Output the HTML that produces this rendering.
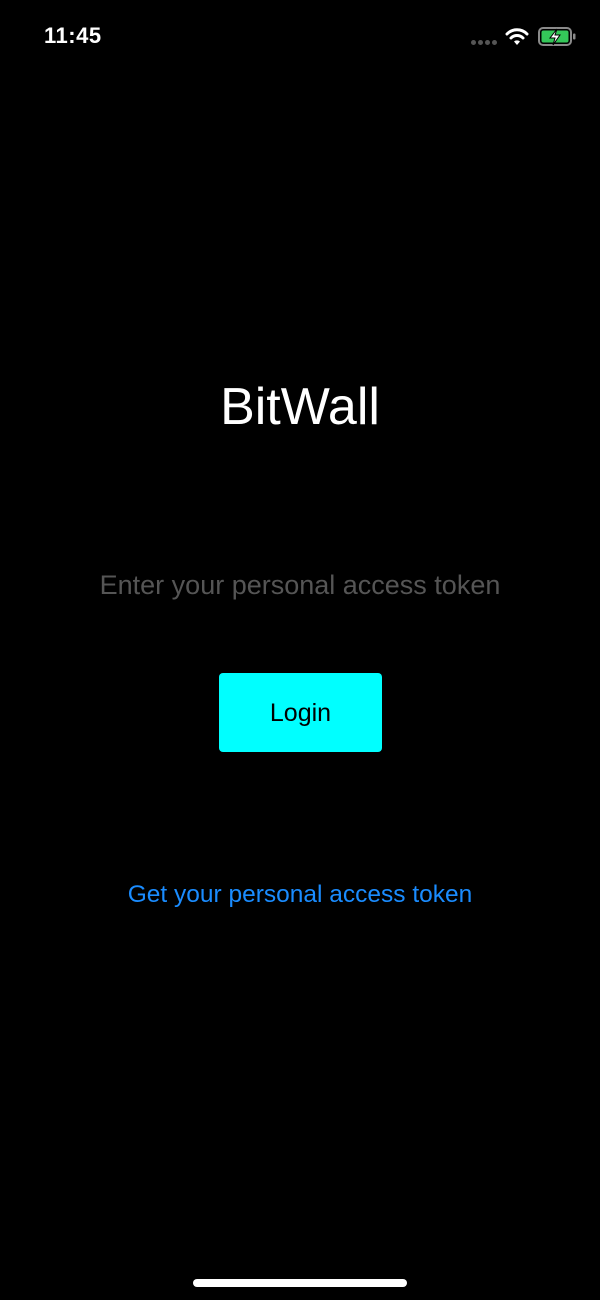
<!DOCTYPE html>
<html><head><meta charset="utf-8"><style>
html,body{margin:0;padding:0;background:#000;width:600px;height:1300px;overflow:hidden;font-family:"Liberation Sans",sans-serif;}
.abs{position:absolute;}
.d{display:inline-block;width:5px;height:5px;border-radius:3px;background:#555;margin-right:2px;vertical-align:top}
</style></head><body>
<div class="abs" style="left:44px;top:23px;color:#fff;font-size:22px;font-weight:bold;letter-spacing:0.5px">11:45</div>
<div class="abs" style="left:471px;top:40px;height:5px;line-height:5px;"><span class="d"></span><span class="d"></span><span class="d"></span><span class="d"></span></div>
<svg class="abs" style="left:505px;top:27px" width="24" height="18" viewBox="0 0 24 18">
<path d="M2 7 A14 14 0 0 1 22 7" stroke="#fff" stroke-width="3" fill="none" stroke-linecap="round"/>
<path d="M6 11 A8.5 8.5 0 0 1 18 11" stroke="#fff" stroke-width="3" fill="none" stroke-linecap="round"/>
<path d="M9 14.5 L12 18 L15 14.5 A4.5 4.5 0 0 0 9 14.5Z" fill="#fff"/>
</svg>
<svg class="abs" style="left:538px;top:27px" width="40" height="20" viewBox="0 0 40 20">
<rect x="1" y="1" width="32" height="17" rx="4" fill="none" stroke="#8a8a8a" stroke-width="2"/>
<rect x="3.5" y="3.5" width="27" height="12" rx="2" fill="#34c759"/>
<rect x="35" y="6.5" width="2.5" height="6" rx="1" fill="#8a8a8a"/>
<path d="M19 2 L12 11 L17 11 L15 18 L22 8 L17 8 Z" fill="#fff" stroke="#000" stroke-width="1"/>
</svg>
<div class="abs" style="left:0;width:600px;top:377px;text-align:center;color:#fff;font-size:52px;">BitWall</div>
<div class="abs" style="left:0;width:600px;top:570px;text-align:center;color:#555;font-size:27px;">Enter your personal access token</div>
<div class="abs" style="left:219px;top:673px;width:163px;height:79px;background:#00ffff;border-radius:4px;text-align:center;line-height:80px;font-size:25px;color:#000;">Login</div>
<div class="abs" style="left:0;width:600px;top:881px;text-align:center;color:#1a8cff;font-size:24.5px;">Get your personal access token</div>
<div class="abs" style="left:193px;top:1279px;width:214px;height:8px;border-radius:4px;background:#fff;"></div>
</body></html>
